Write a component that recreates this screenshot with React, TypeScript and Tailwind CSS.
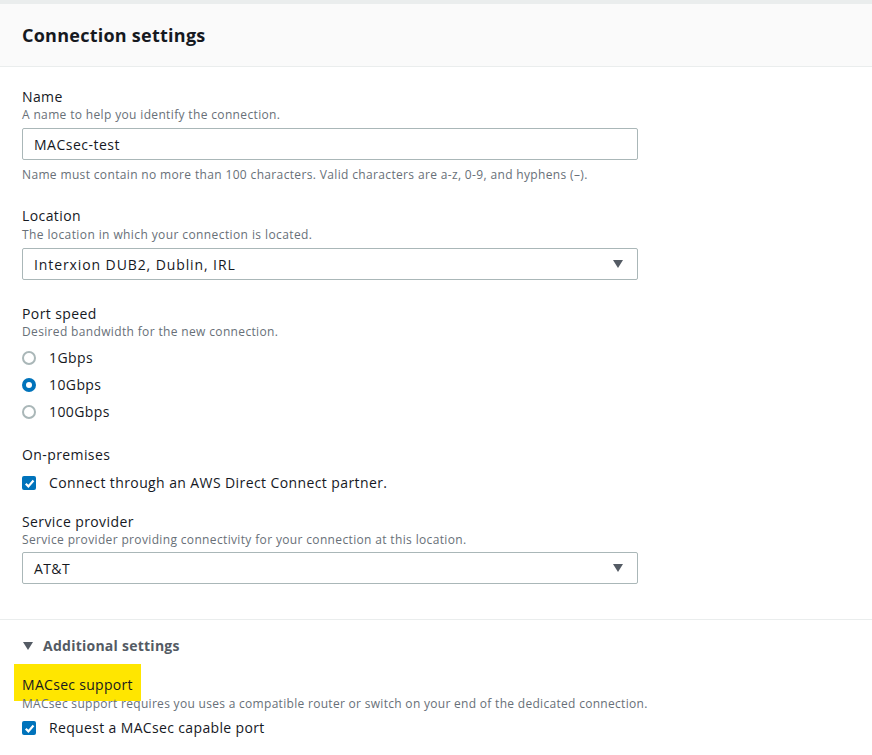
import React from "react";

const Caret = () => (
  <svg width="12" height="10" viewBox="0 0 12 10" className="shrink-0">
    <path d="M1 1h10L6 9z" fill="#545b64" />
  </svg>
);

const Check = () => (
  <span className="w-[14px] h-[14px] rounded-[2px] bg-[#0073bb] flex items-center justify-center shrink-0">
    <svg width="11" height="11" viewBox="0 0 10 10">
      <path d="M1.6 5.2 L4 7.6 L8.6 2.2" stroke="white" strokeWidth="2" fill="none" />
    </svg>
  </span>
);

const Radio = ({ on }: { on?: boolean }) =>
  on ? (
    <span className="w-[14px] h-[14px] rounded-full bg-[#0073bb] flex items-center justify-center shrink-0">
      <span className="w-[6px] h-[6px] rounded-full bg-white" />
    </span>
  ) : (
    <span className="w-[14px] h-[14px] rounded-full border-2 border-[#aab7b8] bg-white shrink-0 box-border" />
  );

export default function App() {
  return (
    <div
      className="w-[872px] h-[755px] overflow-hidden bg-white text-[#16191f]"
      style={{ fontFamily: "'Open Sans', 'Noto Sans', sans-serif" }}
    >
      <div className="h-[4px] bg-[#eaeded]" />
      <div className="h-[63px] bg-[#fafafa] border-b border-[#eaeded] flex items-center px-[22px]">
        <h2 className="text-[18px] font-bold leading-none tracking-[0.25px]">Connection settings</h2>
      </div>

      <div className="px-[22px] pt-[20px]">
        {/* Name */}
        <div className="text-[14px] leading-[19px] tracking-[0.4px]">Name</div>
        <div className="text-[12px] leading-[18px] text-[#687078] tracking-[0.35px]">
          A name to help you identify the connection.
        </div>
        <div className="mt-[4px] w-[616px] h-[32px] border border-[#aab7b8] rounded-[2px] flex items-center px-[11px] text-[14px] tracking-[0.5px]">
          MACsec-test
        </div>
        <div className="mt-[6px] text-[12px] leading-[18px] text-[#687078] tracking-[0.35px]">
          Name must contain no more than 100 characters. Valid characters are a-z, 0-9, and hyphens (–).
        </div>

        {/* Location */}
        <div className="mt-[22px] text-[14px] leading-[19px] tracking-[0.4px]">Location</div>
        <div className="mt-[1px] text-[12px] leading-[18px] text-[#687078] tracking-[0.4px]">
          The location in which your connection is located.
        </div>
        <div className="mt-[4px] w-[616px] h-[32px] border border-[#aab7b8] rounded-[2px] flex items-center justify-between pl-[11px] pr-[13px] text-[14px]">
          <span className="tracking-[0.9px]">Interxion DUB2, Dublin, IRL</span>
          <Caret />
        </div>

        {/* Port speed */}
        <div className="mt-[24px] text-[14px] leading-[19px] tracking-[0.4px]">Port speed</div>
        <div className="text-[12px] leading-[18px] text-[#687078] tracking-[0.35px]">
          Desired bandwidth for the new connection.
        </div>
        <div className="mt-[3px] flex flex-col">
          {[
            ["1Gbps", false],
            ["10Gbps", true],
            ["100Gbps", false],
          ].map(([l, on]) => (
            <div key={l as string} className="h-[27px] flex items-center gap-[13px] text-[14px] tracking-[0.4px]">
              <Radio on={on as boolean} />
              <span>{l as string}</span>
            </div>
          ))}
        </div>

        {/* On-premises */}
        <div className="mt-[20px] text-[14px] leading-[19px] tracking-[0.4px]">On-premises</div>
        <div className="mt-[10px] flex items-center gap-[13px] text-[14px] leading-[18px] tracking-[0.4px]">
          <Check />
          <span>Connect through an AWS Direct Connect partner.</span>
        </div>

        {/* Service provider */}
        <div className="mt-[20px] text-[14px] leading-[19px] tracking-[0.4px]">Service provider</div>
        <div className="text-[12px] leading-[18px] text-[#687078] tracking-[0.35px]">
          Service provider providing connectivity for your connection at this location.
        </div>
        <div className="mt-[3px] w-[616px] h-[32px] border border-[#aab7b8] rounded-[2px] flex items-center justify-between pl-[11px] pr-[13px] text-[14px] tracking-[0.4px]">
          <span>AT&amp;T</span>
          <Caret />
        </div>
      </div>

      <div className="mt-[35px] border-t border-[#eaeded]" />

      <div className="px-[22px] pt-[17px]">
        <div className="flex items-center gap-[9px] text-[14px] font-bold text-[#545b64] leading-[18px] tracking-[0.25px]">
          <Caret />
          <span>Additional settings</span>
        </div>
        <div className="mt-[9px] -ml-[8px] w-[127px] h-[37px] bg-[#ffe600] flex items-center pl-[8px] pt-[4px] text-[14px] tracking-[0.3px]">
          MACsec support
        </div>
        <div className="-mt-[6px] text-[12px] leading-[18px] text-[#687078] tracking-[0.3px]">
          MACsec support requires you uses a compatible router or switch on your end of the dedicated connection.
        </div>
        <div className="mt-[6px] flex items-center gap-[13px] text-[14px] leading-[18px] tracking-[0.35px]">
          <Check />
          <span>Request a MACsec capable port</span>
        </div>
      </div>
    </div>
  );
}
